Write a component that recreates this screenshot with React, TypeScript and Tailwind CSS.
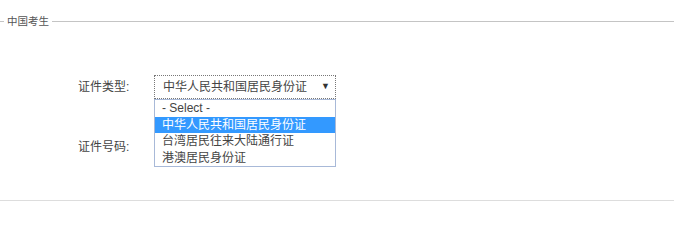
import React from 'react';

const options = ['- Select -', '中华人民共和国居民身份证', '台湾居民往来大陆通行证', '港澳居民身份证'];

export default function App() {
  const selected = 1;

  return (
    <div className="w-[674px] h-[231px] bg-white font-['Liberation_Sans','Noto_Sans_CJK_SC',sans-serif] text-[#444]">
      {/* legend line */}
      <div className="flex items-center pt-[14px]">
        <div className="w-[4px] h-px bg-[#c4c4c4]" />
        <span className="px-[3px] text-[10.5px] leading-[14px] text-[#555]">中国考生</span>
        <div className="flex-1 h-px bg-[#c4c4c4]" />
      </div>

      <div className="pl-[78px] mt-[47px]">
        <div className="flex items-center h-[24px]">
          <label className="w-[76px] text-[12px]">证件类型:</label>
          <div className="relative w-[182px] h-[24px]">
            <div className="flex items-center justify-between h-full border border-dotted border-[#777] pl-[8px] pr-[5px] text-[12px]">
              <span>{options[selected]}</span>
              <span className="text-[9px] text-[#333]">▼</span>
            </div>
            <ul className="absolute left-0 top-full w-full z-10 bg-white border border-[#a8b9d8] text-[12px]">
              {options.map((o, i) => (
                <li
                  key={o}
                  className={`h-[16.5px] leading-[16.5px] pl-[7px] ${i === selected ? 'bg-[#3399ff] text-white' : 'text-[#444]'}`}
                >
                  {o}
                </li>
              ))}
            </ul>
          </div>
        </div>

        <div className="flex items-center h-[24px] mt-[36px]">
          <label className="w-[76px] text-[12px]">证件号码:</label>
          <input className="w-[182px] h-[24px] border border-[#ccc] outline-none" />
        </div>
      </div>

      <div className="mt-[41px] h-px bg-[#ddd]" />
    </div>
  );
}
